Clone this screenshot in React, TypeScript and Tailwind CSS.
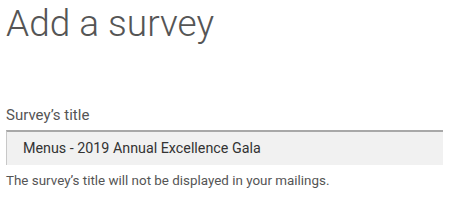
export default function App() {
  return (
    <div className="w-[451px] h-[222px] bg-white px-[6px] font-['Roboto',sans-serif] text-[#555]">
      <h1 className="pt-[2px] text-[37px] font-light leading-[44px] text-[#555]">Add a survey</h1>
      <label className="mt-[59px] block text-[15px] leading-[20px] text-[#555]">Survey’s title</label>
      <div className="mt-[5px] flex h-[35px] w-[437px] items-center border-l border-t-2 border-l-[#c8c8c8] border-t-[#a8a8a8] bg-[#f1f1f1] pl-[16px] text-[14.3px] text-[#333]">
        Menus - 2019 Annual Excellence Gala
      </div>
      <p className="mt-[7px] text-[13.4px] leading-[18px] text-[#555]">
        The survey’s title will not be displayed in your mailings.
      </p>
    </div>
  );
}
